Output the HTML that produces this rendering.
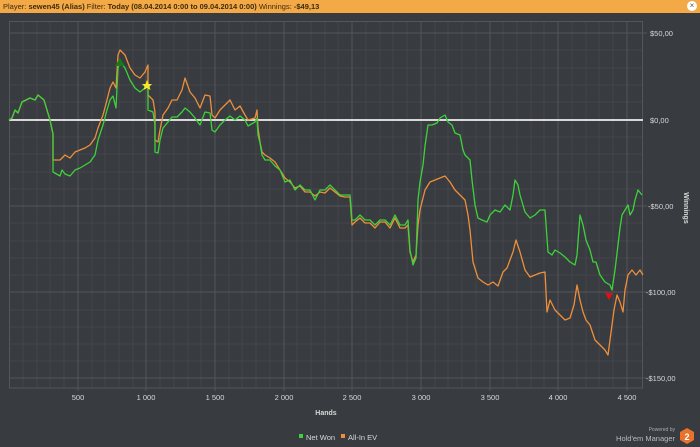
<!DOCTYPE html>
<html><head><style>
html,body{margin:0;padding:0;width:700px;height:447px;overflow:hidden;background:#383b40;font-family:"Liberation Sans",sans-serif}
.hdr{position:absolute;left:0;top:0;width:700px;height:13px;background:#f4a947;font-size:7.5px;line-height:13px;color:#3a2a10;padding-left:3px;box-sizing:border-box;white-space:nowrap}
.hdr b{font-weight:bold}
.close{position:absolute;right:3px;top:1px;width:10px;height:10px;border-radius:50%;background:#fff;color:#555;font-size:8px;line-height:10px;text-align:center}
</style></head><body>
<div class="hdr">Player: <b>sewen45 (Alias)</b> Filter: <b>Today (08.04.2014 0:00 to 09.04.2014 0:00)</b> Winnings: <b>-$49,13</b></div>
<div class="close">×</div>
<svg width="700" height="447" style="position:absolute;left:0;top:0" xmlns="http://www.w3.org/2000/svg">
<g stroke="#43464b" stroke-width="1">
<path d="M23 21V388M37 21V388M50 21V388M64 21V388M92 21V388M105 21V388M119 21V388M133 21V388M160 21V388M174 21V388M188 21V388M201 21V388M229 21V388M242 21V388M256 21V388M270 21V388M297 21V388M311 21V388M325 21V388M338 21V388M366 21V388M380 21V388M393 21V388M407 21V388M435 21V388M448 21V388M462 21V388M476 21V388M503 21V388M517 21V388M531 21V388M544 21V388M572 21V388M586 21V388M599 21V388M613 21V388"/>
<path d="M9 50H643M9 68H643M9 85H643M9 102H643M9 137H643M9 154H643M9 172H643M9 189H643M9 223H643M9 241H643M9 258H643M9 275H643M9 310H643M9 327H643M9 344H643M9 361H643"/>
</g>
<g stroke="#53565b" stroke-width="1">
<path d="M78 21V391M146 21V391M215 21V391M284 21V391M352 21V391M421 21V391M490 21V391M558 21V391M627 21V391"/>
<path d="M9 33H647M9 206H647M9 292H647M9 378H647"/>
<rect x="9.5" y="21.5" width="633" height="366.5" fill="none"/>
</g>
<path d="M9 120H643" stroke="#d8d8d8" stroke-width="2"/>
<g fill="none" stroke-width="1.3" stroke-linejoin="round">
<polyline stroke="#ef8f3a" points="9,120 12,118 15,110 18,113 22,102 30,98 35,100 38,95 44,100 50,120 53,134 53,160 60,160 65,155 70,158 75,152 80,150 85,148 90,145 95,138 98,128 103,115 107,100 110,88 113,82 116,88 118,55 120,50 125,55 130,68 135,75 140,78 145,72 148,65 148,95 153,100 155,112 155,140 158,142 160,130 163,115 168,108 172,100 177,100 182,90 185,78 190,92 195,98 200,108 205,95 210,96 212,115 215,118 220,110 225,105 230,100 235,110 240,106 245,115 248,120 255,118 257,110 258,128 260,142 262,152 265,155 270,158 275,162 280,170 285,178 290,182 295,188 300,186 305,192 310,192 315,196 320,192 325,193 330,188 335,192 340,196 345,197 350,197 352,225 355,222 360,218 365,223 370,223 375,228 380,222 385,222 390,228 395,218 400,228 405,228 408,225 410,252 413,262 416,255 418,225 420,210 425,190 430,182 435,180 440,178 445,176 450,182 455,190 460,195 465,200 468,215 470,230 473,262 478,278 483,282 488,285 493,282 498,286 503,272 507,268 510,260 513,252 516,240 520,252 525,270 530,277 535,275 540,273 545,272 547,312 550,300 555,310 560,315 565,320 570,318 574,305 577,285 580,300 583,312 586,320 590,325 595,340 600,345 605,350 608,355 610,340 614,310 617,295 620,302 623,312 625,290 628,275 632,270 636,275 640,270 643,275"/>
<polyline stroke="#3dd23a" points="9,120 12,118 15,110 18,113 22,102 30,98 35,100 38,95 44,100 50,120 53,134 53,172 60,176 62,170 65,174 70,176 75,170 80,168 85,165 90,162 95,155 98,140 103,125 107,110 110,100 113,96 116,108 118,68 120,62 125,68 130,80 135,88 140,92 145,88 148,85 148,110 153,112 155,125 155,152 158,153 160,140 163,128 168,122 172,117 177,117 182,112 185,108 190,112 195,118 200,125 205,112 210,113 212,130 215,132 220,125 225,120 230,116 235,120 240,116 245,120 248,126 255,122 257,118 258,135 260,143 262,155 265,160 270,160 275,166 280,170 285,182 290,180 295,190 300,185 305,190 310,190 315,200 320,190 325,190 330,185 335,190 340,195 345,195 350,195 352,220 355,220 360,215 365,220 370,220 375,225 380,220 385,220 390,225 395,215 400,225 405,225 408,220 410,250 413,265 416,258 418,200 420,182 423,165 425,146 428,125 432,125 437,123 440,118 445,115 448,122 452,125 455,133 460,135 463,150 465,155 470,160 472,180 475,205 478,218 482,220 487,222 490,215 495,210 500,212 505,205 510,210 513,195 515,180 518,185 520,195 525,212 530,218 535,215 540,210 545,210 548,252 552,255 555,250 560,253 565,257 570,262 575,265 577,255 580,215 583,225 586,240 590,250 593,262 596,262 600,275 605,282 610,285 612,290 615,270 618,245 620,228 622,215 625,210 628,205 630,215 633,210 635,200 638,190 642,195"/>
</g>
<polygon points="115,66 120,58 125,66" fill="#1a7a1a"/>
<polygon points="147,80 148.5,84 152,84 149.5,86.5 150.5,90 147,88 143.5,90 144.5,86.5 142,84 145.5,84" fill="#f5ea2a"/>
<polygon points="605,293 613,293 609,300" fill="#e01010"/>
<g fill="#d8d8d8" font-size="7.5">
<text x="650" y="36">$50,00</text>
<text x="650" y="123">$0,00</text>
<text x="648" y="209">-$50,00</text>
<text x="646" y="295">-$100,00</text>
<text x="646" y="381">-$150,00</text>
<g text-anchor="middle">
<text x="78" y="400">500</text><text x="146" y="400">1 000</text><text x="215" y="400">1 500</text><text x="284" y="400">2 000</text><text x="352" y="400">2 500</text><text x="421" y="400">3 000</text><text x="490" y="400">3 500</text><text x="558" y="400">4 000</text><text x="627" y="400">4 500</text>
</g>
<text x="326" y="415" text-anchor="middle" font-weight="bold" font-size="7">Hands</text>
<text transform="translate(684,208) rotate(90)" text-anchor="middle" font-weight="bold" font-size="7">Winnings</text>
<rect x="299" y="434" width="4" height="4" fill="#3dd23a"/>
<text x="306" y="440">Net Won</text>
<rect x="341" y="434" width="4" height="4" fill="#ef8f3a"/>
<text x="348" y="440">All-In EV</text>
<text x="675" y="431" text-anchor="end" font-size="5" fill="#aaa">Powered by</text>
<text x="675" y="441" text-anchor="end" font-size="7.5" fill="#bbb">Hold'em Manager</text>
</g>
<polygon points="687,428 694,432 694,440 687,444 680,440 680,432" fill="#e8722a"/>
<text x="687" y="440" text-anchor="middle" font-size="9" font-weight="bold" fill="#fff">2</text>
</svg>
</body></html>
